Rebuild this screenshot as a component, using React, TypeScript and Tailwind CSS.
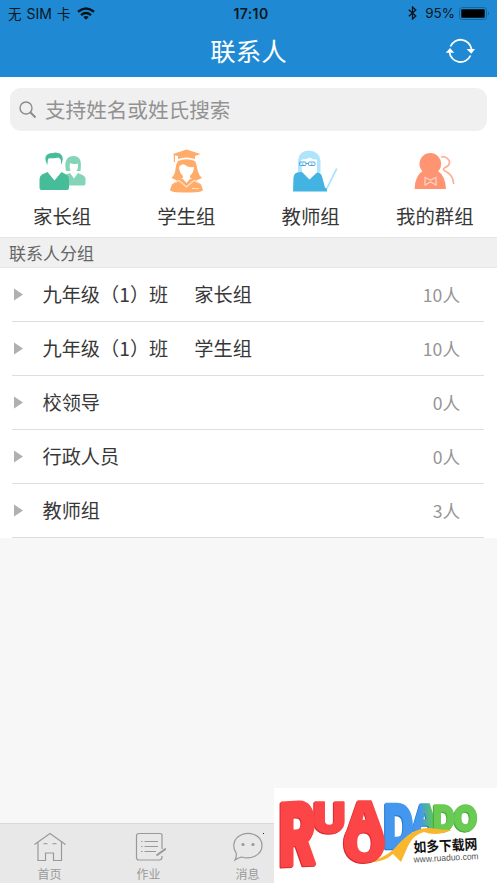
import type { ReactNode } from 'react'

const groups = [
  { name: '九年级（1）班', sub: '家长组', count: 10 },
  { name: '九年级（1）班', sub: '学生组', count: 10 },
  { name: '校领导', count: 0 },
  { name: '行政人员', count: 0 },
  { name: '教师组', count: 3 }
]

const ParentsIcon = () => (
  <svg width="50" height="44" viewBox="0 0 50 44">
    <path
      d="M29 22C27 12 30 7 36.500 7C43 7 45 12 43.500 22H39.500Q41.500 19 41 14.500C38 15.500 35 15 33 14Q32 18 33.500 22ZM29 25.500L33 24L37 29.500L41 24L46.500 26.500Q48.500 27.500 48.500 30V34.500Q48.500 36.500 46.500 36.500H30V27Z"
      fill="#84d5b8"
    />
    <path
      d="M10.500 16C6 8 9 4 16 4Q18 3 21 4C26 5 27 10 24 16C24.500 11 23.500 9.500 21.500 8.500C17 10 13.500 8.500 11.500 9.500Q10 12 10.500 16ZM10.500 23L17.500 31.500L24.500 23L30 26Q32 27 32 30V39Q32 41 30 41H4.500Q2.500 41 2.500 39V30Q2.500 27 5 25.500Z"
      fill="#46bd98"
    />
  </svg>
)

const StudentsIcon = () => (
  <svg width="50" height="44" viewBox="0 0 50 44">
    <g fill="#ffac6b">
      <path d="M12 5L25.500 0.500L39.500 5L34 7V10Q25.500 7 17 10V7L14 6.500V13H12.800V6Z" />
      <path d="M17 12Q25.500 8.500 34 12Q36 16 36.500 21Q37.500 26 41 29L34 32L28 28H23L17 32L10.500 29Q14 26 14.500 20Q15 15 17 12Z" />
      <path d="M18 30L11 35.500L9 41Q9 43.500 25.500 43.500T42 41L40 35.500L33 30Z" />
    </g>
    <path d="M18 18Q21 14 24 16Q28 19 33 18Q33 23 29 27V30L25.500 34L22 30V27Q18 23 18 18Z" fill="#fff" />
    <path d="M14 33.500L18 31.500L25.500 38L33 31.500L38 34M31 39.500H38" fill="none" stroke="#ffe3cb" strokeWidth="1.100" />
  </svg>
)

const TeachersIcon = () => (
  <svg width="50" height="44" viewBox="0 0 50 44" className="overflow-visible">
    <g transform="translate(3 1.500)">
      <path d="M9 23V10Q10 0 20 0Q31 1 31.500 11V22H28V9H13V23Z" fill="#aee5fc" />
      <path d="M12 9.500Q17 9 21 7Q24 10 28 9.500V18Q26 24 20.500 29L13 20Z" fill="#fff" />
      <path d="M8 22L13 21.500L20.500 29L28 22Q32 22 33 26L36 37L38 38V41H4L4.500 27Q5 23 8 22Z" fill="#43b3e2" />
      <path d="M37 38L47 17.500L48.500 18.500L38.500 38.500Z" fill="#a9e2fa" />
      <g fill="none" stroke="#4ba8dc" strokeWidth="1">
        <rect x="10.500" y="11.500" width="6.500" height="3.500" rx="1" />
        <rect x="19.500" y="11.500" width="6.500" height="3.500" rx="1" />
        <path d="M17 13H19.500M13 13.500H14.500M22 13.500H23.500" />
      </g>
    </g>
  </svg>
)

const MyGroupsIcon = () => (
  <svg width="50" height="44" viewBox="0 0 50 44">
    <g fill="#ff9472">
      <circle cx="20.300" cy="14.800" r="10.800" />
      <path d="M13 21.500H27.500Q35.500 27 36 40H4.500Q5 27 13 21.500Z" />
    </g>
    <path
      d="M31 8C35 7 40 10 39.500 14Q39 17 35 18.500C32.500 20 33 21 36 22.500Q43 26 43.700 35"
      fill="none"
      stroke="#ffae91"
      strokeWidth="1.600"
    />
    <path d="M15 28.500L20.500 31L26 28.500V36L20.500 33L15 36Z" fill="none" stroke="#ffd5c5" strokeWidth="1.200" />
  </svg>
)

const shortcuts = [
  { label: '家长组', icon: <ParentsIcon /> },
  { label: '学生组', icon: <StudentsIcon /> },
  { label: '教师组', icon: <TeachersIcon /> },
  { label: '我的群组', icon: <MyGroupsIcon /> }
]

const StatusBar = () => (
  <div className="grid h-[26px] grid-cols-3 items-center pl-2 pr-[7px] text-[13.500px] text-[#0a1620]">
    <div className="flex items-center gap-[7px]">
      <span className="flex items-baseline gap-[5px]">
        无<span className="font-['Inter'] text-[14px]">SIM</span>卡
      </span>
      <svg width="18" height="13" viewBox="0 0 18 13" fill="none" stroke="#07131c" strokeWidth="2.400">
        <path d="M1 4.800Q9-1.800 17 4.800M4 8.200Q9 4 14 8.200" />
        <path d="M6.300 10Q9 8 11.700 10L9 12.700Z" fill="#07131c" stroke="none" />
      </svg>
    </div>
    <span className="pl-1 text-center font-['Inter'] text-[14px] font-semibold tracking-[0.400px]">17:10</span>
    <div className="flex items-center justify-end">
      <svg className="mr-2" width="9" height="14" viewBox="0 0 9 14" fill="none" stroke="#07131c" strokeWidth="1.300">
        <path d="M0.800 3.800L7.800 10L4.500 13V1L7.800 4L0.800 10.200" />
      </svg>
      <span className="mr-1 font-['Inter'] text-[13.500px]">95%</span>
      <svg width="31" height="13" viewBox="0 0 31 13">
        <rect x="0.500" y="0.500" width="27" height="12" rx="3" fill="none" stroke="#12679f" />
        <rect x="2.300" y="2.300" width="23.400" height="8.400" rx="1" fill="#000" />
        <path d="M29 4.500Q31 6.500 29 8.500Z" fill="#12679f" />
      </svg>
    </div>
  </div>
)

const Header = () => (
  <header className="h-[77px] bg-[#1f8ad3]">
    <StatusBar />
    <div className="grid h-[48px] grid-cols-[1fr_auto_1fr] items-center">
      <span />
      <h1 className="text-[25.500px] font-normal leading-none text-white">联系人</h1>
      <svg
        className="mr-[21px] mt-0.5 justify-self-end"
        width="31"
        height="26"
        viewBox="0 0 31 26"
        fill="none"
        stroke="#fff"
        strokeWidth="1.800"
      >
        <path d="M5.500 8.500A11 11 0 0 1 26.500 11M25.500 17.500A11 11 0 0 1 4.500 14" />
        <path d="M21.500 11H30L26.300 15.800ZM0.800 14.800H9.300L5 10Z" fill="#fff" stroke="none" />
      </svg>
    </div>
  </header>
)

const SearchBox = () => (
  <div className="mx-2.5 mt-[11px] flex h-[43px] items-center rounded-[11px] bg-[#f0f0f0] pl-[9px]">
    <svg width="18" height="18" viewBox="0 0 18 18" fill="none" stroke="#8c8c8c" strokeWidth="1.400">
      <circle cx="7" cy="7" r="6" />
      <path d="M11.300 11.300L16.500 16.500" strokeWidth="2" />
    </svg>
    <span className="ml-2 text-[20.600px] leading-none text-[#929292]">支持姓名或姓氏搜索</span>
  </div>
)

const GroupList = () => (
  <ul className="bg-white">
    {groups.map((group, i) => (
      <li key={i} className="ml-3 mr-[13px] flex h-[54px] items-center border-b border-[#dedede] pr-6">
        <svg className="ml-[1.500px]" width="9" height="13" viewBox="0 0 9 13">
          <path d="M0 0.500L9 6.500L0 12.500Z" fill="#b0b0b0" />
        </svg>
        <span className="ml-[20px] text-[19.200px] leading-none text-[#383838]">{group.name}</span>
        {group.sub && <span className="ml-[26px] text-[19.200px] leading-none text-[#383838]">{group.sub}</span>}
        <span className="ml-auto text-[17.600px] leading-none text-[#959595]">{group.count}人</span>
      </li>
    ))}
  </ul>
)

const Tab = ({ label, children }: { label: string; children: ReactNode }) => (
  <div className="flex w-[99px] flex-col items-center pt-2">
    <svg width="34" height="31" viewBox="0 0 34 31" fill="none" stroke="#999" strokeWidth="1.200">
      {children}
    </svg>
    <span className="mt-1 text-[12px] leading-[14px] text-[#999]">{label}</span>
  </div>
)

const TabBar = () => (
  <nav className="flex h-[60px] border-t border-[#d8dbda] bg-[#e8e8e8]">
    <Tab label="首页">
      <path d="M1.500 12.500L17 1.500L32.500 12.500M5 10V28.500H12.500V21H20.500V28.500H28.500V10M10.500 12Q12.500 11 14.500 12M19.500 12Q21.500 11 23.500 12" />
    </Tab>
    <Tab label="作业">
      <path d="M30 17V3.500Q30 1.500 28 1.500H7Q4.500 1.500 4.500 4V25.500Q4.500 28 7 28H27Q30 28 30 25V24" />
      <path d="M9 9.500H10.500M12.500 9.500H26M9 14.500H10.500M12.500 14.500H26M9 19.500H10.500M12.500 19.500H24" />
      <path d="M24.500 23.500L34 16.500" strokeWidth="2" />
    </Tab>
    <Tab label="消息">
      <path d="M5 20.500C1 15 2.500 7 9 3.500C17-1 31 2 31 13.500C31 23 20 28 10.500 25Q7 26 4 28Q6 24 5 20.500Z" />
      <circle cx="12" cy="12.500" r="1" fill="#999" />
      <circle cx="22" cy="12.500" r="1" fill="#999" />
    </Tab>
  </nav>
)

interface LetterProps {
  ch: string
  x: number
  y: number
  sx: number
  sy: number
  fill: string
  skew?: number
}

// chunky letter, y is the baseline
const Letter = ({ ch, x, y, sx, sy, fill, skew = 0 }: LetterProps) => (
  <text
    transform={`translate(${x} ${y}) skewY(${skew}) scale(${sx} ${sy})`}
    fontFamily="Inter"
    fontWeight="900"
    fontSize="40"
    fill={fill}
    stroke={fill}
    strokeWidth="1.5"
    strokeLinejoin="round"
  >
    {ch}
  </text>
)

const red = '#fb4546'
const blue = '#4497ee'
const green = '#6acb54'

const SiteBadge = () => (
  <div className="absolute bottom-0 right-0 h-[95px] w-[223px] bg-white">
    <svg width="223" height="95" viewBox="0 0 223 95">
      <defs>
        <linearGradient id="blueGreen">
          <stop offset="0.3" stopColor="#4497ee" />
          <stop offset="0.75" stopColor="#5bc267" />
        </linearGradient>
      </defs>
      <g className="drop-shadow-[-1px_1px_0_#2375cf]">
        <Letter ch="D" x={110} y={60} sx={1.02} sy={1.5} fill={blue} />
        <Letter ch="A" x={138} y={41.5} sx={0.82} sy={0.88} fill="url(#blueGreen)" />
      </g>
      <g className="drop-shadow-[-1px_1px_0_#46a83b]">
        <Letter ch="D" x={159} y={42.5} sx={0.76} sy={0.9} fill={green} />
        <Letter ch="O" x={179.500} y={42.500} sx={0.78} sy={0.9} fill={green} />
      </g>
      <path
        d="M90 74Q107 73 120 61C134 45 143 40 156 40Q166 42 178 42Q162 49 150 44Q140 46 134 58L127 74L119 66Q108 76 90 74Z"
        fill="#f9b72d"
      />
      <g className="drop-shadow-[-1px_1.500px_0_#d9282f]">
        <Letter ch="R" x={5} y={78} sx={1.38} sy={2.16} skew={-3} fill={red} />
        <Letter ch="U" x={39} y={45} sx={1.14} sy={1.08} fill={red} />
        <Letter ch="A" x={72} y={45} sx={1.18} sy={1.08} fill={red} />
      </g>
      <g className="drop-shadow-[-1px_1px_0_#d9282f]">
        <Letter ch="O" x={69} y={72.500} sx={1.38} sy={1.26} fill={red} />
      </g>
      <g transform="rotate(-3 140 60)">
        <text
          x="139.5"
          y="64.5"
          textLength="64"
          lengthAdjust="spacingAndGlyphs"
          fontFamily="Noto Sans CJK SC"
          fontWeight="700"
          fontSize="14"
          fill="#111"
        >
          如多下载网
        </text>
        <text
          x="139"
          y="74.5"
          textLength="65"
          lengthAdjust="spacingAndGlyphs"
          fontFamily="Liberation Sans"
          fontSize="9"
          fill="#555"
        >
          www.ruaduo.com
        </text>
      </g>
    </svg>
  </div>
)

export default function App() {
  return (
    <div className="relative flex h-[883px] w-[497px] flex-col overflow-hidden bg-[#f7f7f7] font-['Noto_Sans_CJK_SC',sans-serif]">
      <Header />
      <div className="h-[160px] bg-white">
        <div className="flow-root">
          <SearchBox />
        </div>
        <div className="mt-[18px] grid grid-cols-4">
          {shortcuts.map(({ label, icon }) => (
            <div key={label} className="flex flex-col items-center">
              {icon}
              <span className="mt-[13px] text-[19.400px] leading-none text-[#383838]">{label}</span>
            </div>
          ))}
        </div>
      </div>
      <h2 className="h-[31px] shrink-0 border-y border-[#e6e6e6] bg-[#f0f0f0] pl-[9px] text-[17px] leading-[30px] text-[#666]">
        联系人分组
      </h2>
      <GroupList />
      <div className="mt-auto">
        <TabBar />
      </div>
      <SiteBadge />
      <span className="absolute left-[263px] top-[833px] size-px bg-[#222]" />
    </div>
  )
}
